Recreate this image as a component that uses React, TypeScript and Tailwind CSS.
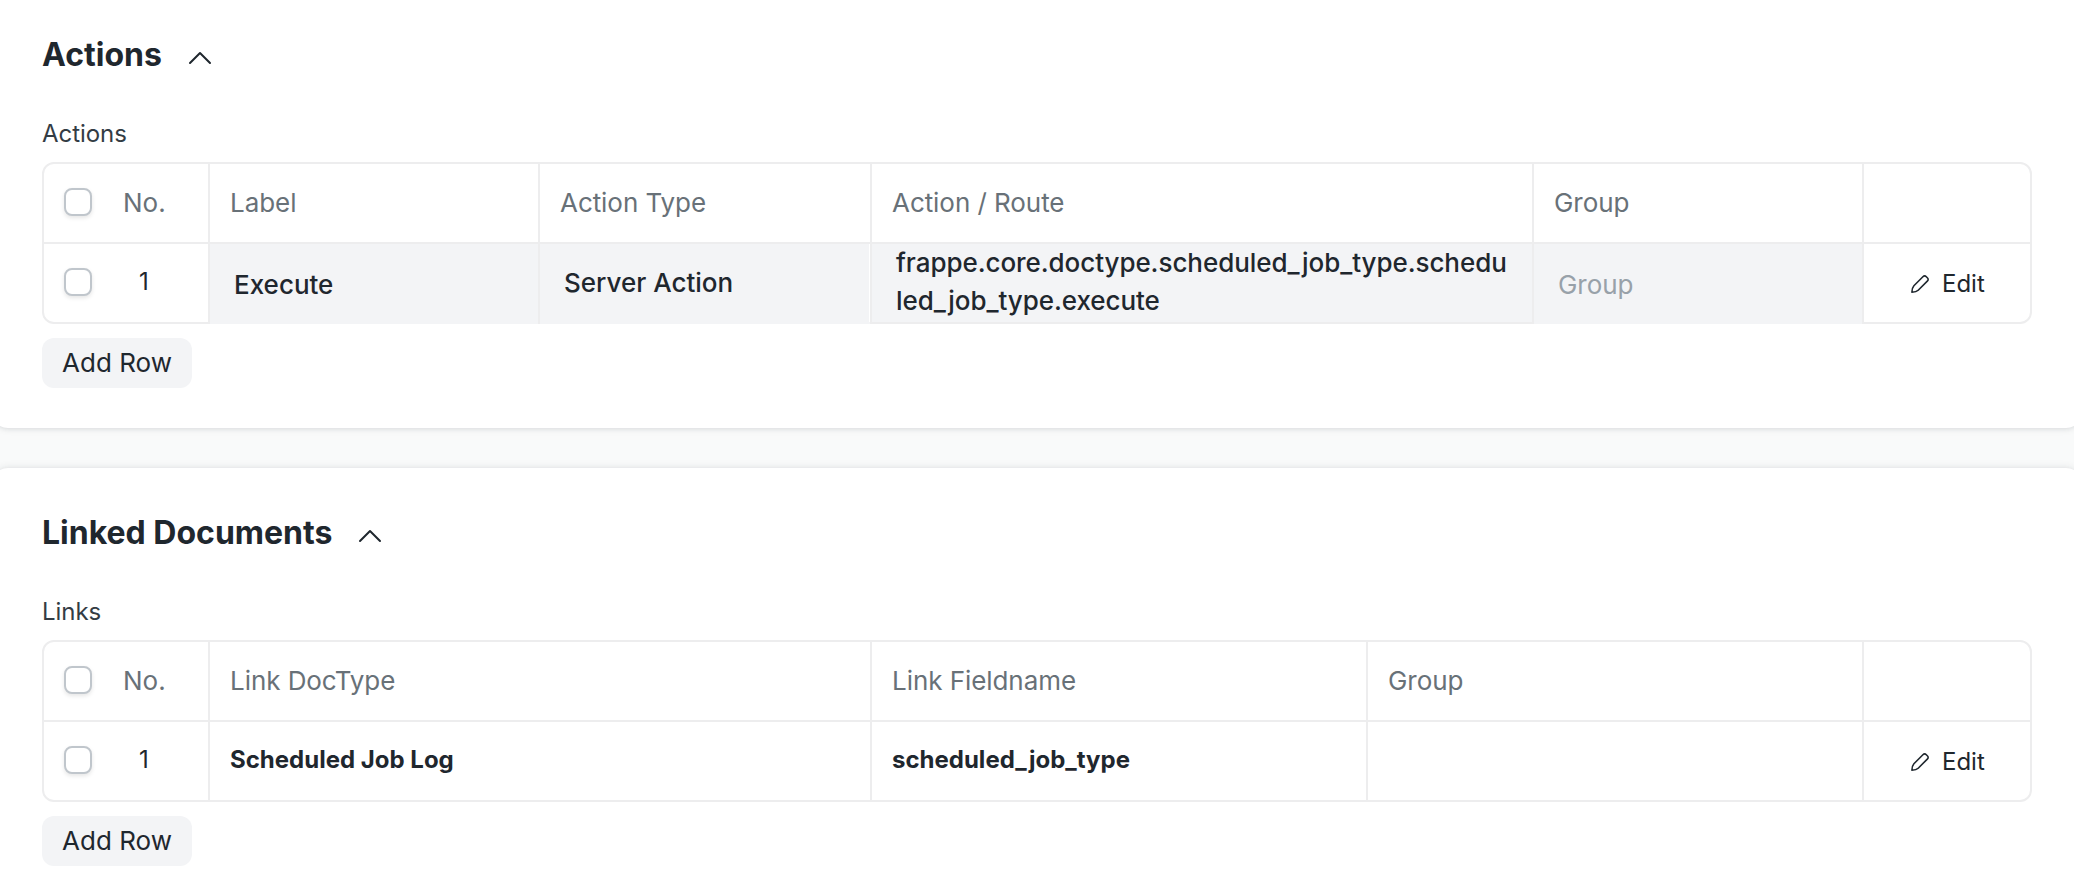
import { ReactNode } from 'react';

function ChevronUp() {
  return (
    <svg className="mt-[6px] block h-[16px] w-[26px]" viewBox="0 0 26 16" fill="none" stroke="#1f272e" strokeWidth="2" strokeLinecap="round" strokeLinejoin="round">
      <path d="M3 13 L13 3 L23 13" />
    </svg>
  );
}

function Pencil() {
  return (
    <svg className="block h-[20px] w-[20px]" viewBox="0 0 20 20" fill="none" stroke="#1f272e" strokeWidth="1.6" strokeLinejoin="round">
      <path d="M12.9 2.7 Q14.6 1 16.3 2.7 L17.3 3.7 Q19 5.400 17.300 7.100 L8.200 16.200 Q6.400 18 1.900 18.200 Q2.100 13.600 3.900 11.700 Z" />
    </svg>
  );
}

function Checkbox() {
  return <span className="block size-[28px] rounded-[8px] border-2 border-[#c0c6cc] bg-white shadow-[0_2px_4px_rgba(0,0,0,0.1)]" />;
}

function Section({ title, label, className, children }: { title: string; label: string; className: string; children: ReactNode }) {
  return (
    <section className={`-mx-[8px] px-[50px] rounded-[16px] bg-white shadow-[0_1px_4px_rgba(25,39,52,0.08),0_0_8px_rgba(25,39,52,0.1)] ${className}`}>
      <div className="flex h-[40px] items-center">
        <h2 className="text-[32px] leading-[40px] font-bold text-[#1f272e]">{title}</h2>
        <span className="ml-[25px]">
          <ChevronUp />
        </span>
      </div>
      <div className="mt-[41px] h-[46px] text-[24px] leading-[36px] tracking-[-0.05px] text-[#333c44]">{label}</div>
      {children}
      <button className="mt-[14px] block h-[50px] w-[150px] rounded-[12px] bg-[#f3f4f6] text-center text-[26px] leading-[50px] text-[#1f272e]">
        Add Row
      </button>
    </section>
  );
}

function Head({ children }: { children?: ReactNode }) {
  return <div className="h-[78px] border-l-2 border-[#ededee] pl-[20px] text-[26px] leading-[77px] tracking-[-0.06px] text-[#687178]">{children}</div>;
}

function IndexCell({ header }: { header?: boolean }) {
  return (
    <div className="flex h-[78px] pl-[20px]">
      <div className="pt-[24px]">
        <Checkbox />
      </div>
      {header ? (
        <span className="ml-[31px] text-[26px] leading-[77px] text-[#687178]">No.</span>
      ) : (
        <span className="ml-[16px] w-[72px] text-center text-[24px] leading-[75px] text-[#1f272e]">1</span>
      )}
    </div>
  );
}

function EditCell() {
  return (
    <div className="flex h-[78px] border-l-2 border-[#ededee] pl-[46px]">
      <span className="mt-[30px]">
        <Pencil />
      </span>
      <span className="ml-[12px] text-[24px] leading-[79px] text-[#1f272e]">Edit</span>
    </div>
  );
}

const frame = 'rounded-[12px] border-2 border-[#ededee] bg-white';
const actionCols = 'grid grid-cols-[164px_330px_332px_662px_330px_168px]';
const linkCols = 'grid grid-cols-[164px_662px_496px_496px_168px]';

export default function App() {
  return (
    <div className="h-[896px] overflow-hidden bg-[#f9fafa] font-['Inter',sans-serif]">
      <Section title="Actions" label="Actions" className="h-[444px] -mt-[16px] pt-[51px]">
        <div className={frame}>
          <div className={`${actionCols} border-b-2 border-[#ededee]`}>
            <IndexCell header />
            <Head>Label</Head>
            <Head>Action Type</Head>
            <Head>Action / Route</Head>
            <Head>Group</Head>
            <Head />
          </div>
          <div className={`${actionCols} h-[78px]`}>
            <IndexCell />
            <div className="h-[80px] border-l-2 border-[#ededee] bg-[#f3f4f6] pl-[24px] text-[26px] leading-[81px] font-medium text-[#1f272e]">Execute</div>
            <div className="h-[80px] border-l-2 border-[#ededee] bg-[#f3f4f6]">
              <div className="h-[78px] border-r border-white pl-[24px] text-[26px] leading-[78px] font-medium text-[#1f272e]">Server Action</div>
            </div>
            <div className="h-[78px] border-l-2 border-[#ededee] bg-[#f3f4f6] pl-[24px] text-[26px] leading-[38px] font-medium tracking-[-0.06px] text-[#1f272e]">
              frappe.core.doctype.scheduled_job_type.schedu
              <br />
              led_job_type.execute
            </div>
            <div className="h-[80px] border-l-2 border-[#ededee] bg-[#f3f4f6] pl-[24px] text-[26px] leading-[81px] tracking-[-0.06px] text-[#98a1a9]">Group</div>
            <EditCell />
          </div>
        </div>
      </Section>
      <Section title="Linked Documents" label="Links" className="mt-[40px] h-[480px] pt-[45px]">
        <div className={frame}>
          <div className={`${linkCols} border-b-2 border-[#ededee]`}>
            <IndexCell header />
            <Head>Link DocType</Head>
            <Head>Link Fieldname</Head>
            <Head>Group</Head>
            <Head />
          </div>
          <div className={`${linkCols} h-[78px]`}>
            <IndexCell />
            <div className="border-l-2 border-[#ededee] pl-[20px] text-[24px] leading-[75px] font-bold text-[#1f272e]">Scheduled Job Log</div>
            <div className="border-l-2 border-[#ededee] pl-[20px] text-[24px] leading-[75px] font-bold text-[#1f272e]">scheduled_job_type</div>
            <div className="border-l-2 border-[#ededee]" />
            <EditCell />
          </div>
        </div>
      </Section>
    </div>
  );
}
